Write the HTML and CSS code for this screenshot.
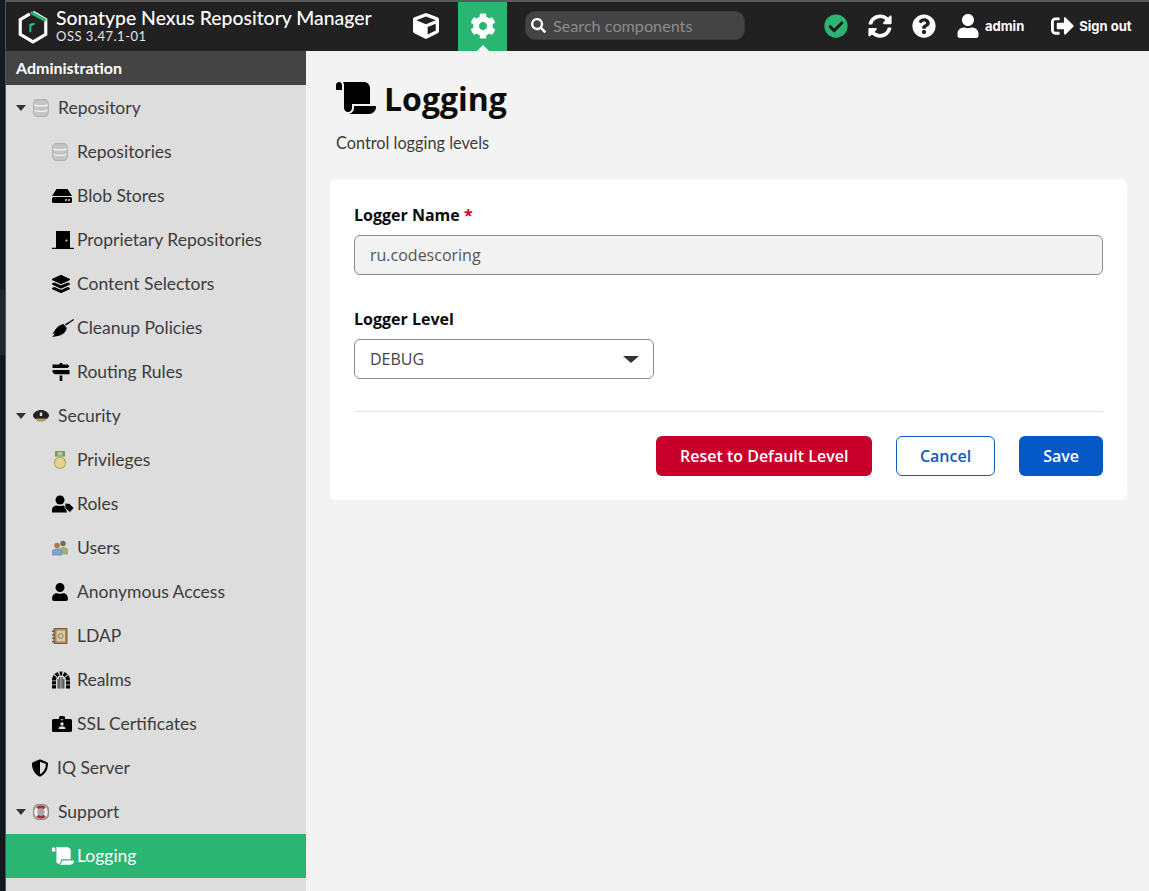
FILE: index.html
```html
<!DOCTYPE html>
<html lang="en">
<head>
    <meta charset="UTF-8">
    <title>Logging - Nexus Repository Manager</title>
    <link rel="stylesheet" href="styles.css">
</head>
<body>
    <svg class="icon-defs" aria-hidden="true">
        <symbol id="i-cube" viewBox="0 0 512 512"><path d="M239.1 6.3l-208 78c-18.7 7-31.1 25-31.1 45v225.1c0 18.2 10.3 34.8 26.5 42.9l208 104c13.5 6.8 29.4 6.8 42.9 0l208-104c16.3-8.1 26.5-24.8 26.5-42.9V129.3c0-20-12.4-37.9-31.1-44.9l-208-78C262 2.2 250 2.2 239.1 6.3zM256 68.4l192 72v1.1l-192 78-192-78v-1.1l192-72zm32 356V275.5l160-65v133.9l-160 80z"/></symbol>
        <symbol id="i-cog" viewBox="0 0 512 512"><path d="M487.4 315.7l-42.6-24.6c4.3-23.2 4.3-47 0-70.2l42.6-24.6c4.9-2.8 7.1-8.6 5.5-14-11.1-35.6-30-67.8-54.7-94.6-3.8-4.1-10-5.1-14.8-2.3L380.8 110c-17.9-15.4-38.5-27.3-60.8-35.1V25.8c0-5.6-3.9-10.5-9.4-11.7-36.7-8.2-74.3-7.8-109.2 0-5.5 1.2-9.4 6.1-9.4 11.7V75c-22.2 7.9-42.8 19.8-60.8 35.1L88.7 85.5c-4.9-2.8-11-1.9-14.8 2.3-24.7 26.7-43.6 58.9-54.7 94.6-1.7 5.4.6 11.2 5.5 14L67.3 221c-4.3 23.2-4.3 47 0 70.2l-42.6 24.6c-4.9 2.8-7.1 8.6-5.5 14 11.1 35.6 30 67.8 54.7 94.6 3.8 4.1 10 5.1 14.8 2.3l42.6-24.6c17.9 15.4 38.5 27.3 60.8 35.1v49.2c0 5.6 3.9 10.5 9.4 11.7 36.7 8.2 74.3 7.8 109.2 0 5.5-1.2 9.4-6.1 9.4-11.7v-49.2c22.2-7.9 42.8-19.8 60.8-35.1l42.6 24.6c4.9 2.8 11 1.9 14.8-2.3 24.7-26.7 43.6-58.9 54.7-94.6 1.5-5.5-.7-11.3-5.6-14.1zM256 336c-44.1 0-80-35.9-80-80s35.9-80 80-80 80 35.9 80 80-35.9 80-80 80z"/></symbol>
        <symbol id="i-search" viewBox="0 0 512 512"><path d="M505 442.7L405.3 343c-4.5-4.5-10.6-7-17-7H372c27.6-35.3 44-79.7 44-128C416 93.1 322.9 0 208 0S0 93.1 0 208s93.1 208 208 208c48.3 0 92.7-16.4 128-44v16.3c0 6.4 2.5 12.5 7 17l99.7 99.7c9.4 9.4 24.6 9.4 33.9 0l28.3-28.3c9.4-9.4 9.4-24.6.1-34zM208 336c-70.7 0-128-57.2-128-128 0-70.7 57.2-128 128-128 70.7 0 128 57.2 128 128 0 70.7-57.2 128-128 128z"/></symbol>
        <symbol id="i-check" viewBox="0 0 512 512"><circle cx="256" cy="256" r="248" fill="#2bb573"/><path fill="#1b1b1b" d="M227.314 387.314l184-184c6.248-6.248 6.248-16.379 0-22.627l-22.627-22.627c-6.248-6.249-16.379-6.249-22.628 0L216 308.118l-70.059-70.059c-6.248-6.248-16.379-6.248-22.628 0l-22.627 22.627c-6.248 6.248-6.248 16.379 0 22.627l104 104c6.249 6.249 16.379 6.249 22.628.001z"/></symbol>
        <symbol id="i-sync" viewBox="0 0 512 512"><path d="M370.72 133.28C339.458 104.008 298.888 87.962 255.848 88c-77.458.068-144.328 53.178-162.791 126.85-1.344 5.363-6.122 9.15-11.651 9.15H24.103c-7.498 0-13.194-6.807-11.807-14.176C33.933 94.924 134.813 8 256 8c66.448 0 126.791 26.136 171.315 68.685L463.03 40.97C478.149 25.851 504 36.559 504 57.941V192c0 13.255-10.745 24-24 24H345.941c-21.382 0-32.09-25.851-16.971-40.971l41.75-41.749zM32 296h134.059c21.382 0 32.09 25.851 16.971 40.971l-41.75 41.75c31.262 29.273 71.835 45.319 114.876 45.28 77.418-.07 144.315-53.144 162.787-126.849 1.344-5.363 6.122-9.15 11.651-9.15h57.304c7.498 0 13.194 6.807 11.807 14.176C478.067 417.076 377.187 504 256 504c-66.448 0-126.791-26.136-171.315-68.685L48.97 471.03C33.851 486.149 8 475.441 8 454.059V320c0-13.255 10.745-24 24-24z"/></symbol>
        <symbol id="i-help" viewBox="0 0 512 512"><path d="M504 256c0 136.997-111.043 248-248 248S8 392.997 8 256C8 119.083 119.043 8 256 8s248 111.083 248 248zM262.655 90c-54.497 0-89.255 22.957-116.549 63.758-3.536 5.286-2.353 12.415 2.715 16.258l34.699 26.31c5.205 3.947 12.621 3.008 16.665-2.122 17.864-22.658 30.113-35.797 57.303-35.797 20.429 0 45.698 13.148 45.698 32.958 0 14.976-12.363 22.667-32.534 33.976C247.128 238.528 216 254.941 216 296v4c0 6.627 5.373 12 12 12h56c6.627 0 12-5.373 12-12v-1.333c0-28.462 83.186-29.647 83.186-106.667 0-58.002-60.165-102-116.531-102zM256 338c-25.365 0-46 20.635-46 46 0 25.364 20.635 46 46 46s46-20.636 46-46c0-25.365-20.635-46-46-46z"/></symbol>
        <symbol id="i-user" viewBox="0 0 448 512"><path d="M224 256c70.7 0 128-57.3 128-128S294.7 0 224 0 96 57.3 96 128s57.3 128 128 128zm89.6 32h-16.7c-22.2 10.2-46.9 16-72.9 16s-50.6-5.8-72.9-16h-16.7C60.2 288 0 348.2 0 422.4V464c0 26.5 21.5 48 48 48h352c26.5 0 48-21.5 48-48v-41.6c0-74.2-60.2-134.4-134.4-134.4z"/></symbol>
        <symbol id="i-signout" viewBox="0 0 512 512"><path d="M497 273L329 441c-15 15-41 4.5-41-17v-96H152c-13.3 0-24-10.7-24-24v-96c0-13.3 10.7-24 24-24h136V88c0-21.4 25.9-32 41-17l168 168c9.3 9.4 9.3 24.6 0 34zM192 436v-40c0-6.6-5.4-12-12-12H96c-17.7 0-32-14.3-32-32V160c0-17.7 14.3-32 32-32h84c6.6 0 12-5.4 12-12V76c0-6.6-5.4-12-12-12H96c-53 0-96 43-96 96v192c0 53 43 96 96 96h84c6.6 0 12-5.4 12-12z"/></symbol>
        <symbol id="i-scroll" viewBox="0 0 640 512"><path d="M48 0C21.53 0 0 21.53 0 48v64c0 8.84 7.16 16 16 16h80V48C96 21.53 74.47 0 48 0zm208 412.57V352h288V96c0-52.94-43.06-96-96-96H111.59C121.74 13.41 128 29.92 128 48v368c0 38.87 34.58 69.65 74.7 63.12C234.17 474 256 444.46 256 412.57zM288 384v32c0 52.93-43.06 96-96 96h336c61.86 0 112-50.14 112-112 0-8.84-7.16-16-16-16H288z"/></symbol>
        <symbol id="i-layers" viewBox="0 0 512 512"><path d="M12.41 148.02l232.94 105.67c6.8 3.09 14.49 3.09 21.29 0l232.94-105.67c16.55-7.51 16.55-32.52 0-40.03L266.65 2.31a25.607 25.607 0 0 0-21.29 0L12.41 107.98c-16.55 7.51-16.55 32.53 0 40.04zm487.18 88.28l-58.09-26.33-161.64 73.27c-7.56 3.43-15.59 5.17-23.86 5.17s-16.29-1.74-23.86-5.17L70.51 209.97l-58.1 26.33c-16.55 7.5-16.55 32.5 0 40l232.94 105.59c6.8 3.08 14.49 3.08 21.29 0L499.59 276.3c16.55-7.5 16.55-32.5 0-40zm0 127.8l-57.87-26.23-161.86 73.37c-7.56 3.43-15.59 5.17-23.86 5.17s-16.29-1.74-23.86-5.17L70.29 337.87 12.41 364.1c-16.55 7.5-16.55 32.5 0 40l232.94 105.59c6.8 3.08 14.49 3.08 21.29 0L499.59 404.1c16.55-7.5 16.55-32.5 0-40z"/></symbol>
        <symbol id="i-shield" viewBox="16 0 480 512"><path d="M466.5 83.7l-192-80a48.15 48.15 0 0 0-36.9 0l-192 80C27.7 91.1 16 108.6 16 128c0 198.5 114.5 335.7 221.5 380.3 11.8 4.9 25.1 4.9 36.9 0C360.1 472.6 496 349.3 496 128c0-19.4-11.7-36.9-29.5-44.3zM256.1 446.3l-.1-381 175.9 73.3c-3.3 151.4-82.1 261.1-175.8 307.7z"/></symbol>
        <symbol id="i-db" viewBox="0 0 14 16"><rect x=".5" y=".5" width="13" height="15" rx="3.500" fill="#c4c4c4" stroke="#b0b0b0"/><path fill="none" stroke="#f4f4f4" stroke-width="1.200" d="M1 5.200c2 1.300 10 1.300 12 0M1 10c2 1.300 10 1.300 12 0"/></symbol>
        <symbol id="i-hdd" viewBox="0 0 20 14"><path d="M4.500 0h11l4.500 7H0zM1.500 8h17A1.500 1.500 0 0 1 20 9.500v3a1.500 1.500 0 0 1-1.500 1.500h-17A1.500 1.500 0 0 1 0 12.500v-3A1.500 1.500 0 0 1 1.500 8z"/><path fill="#ddd" d="M13 10.200h2v1.600h-2zM16 10.200h2v1.600h-2z"/></symbol>
        <symbol id="i-door" viewBox="0 0 22 18"><path d="M4 0h14v17H4zM0 16.800h22V18H0z"/><circle cx="14.500" cy="9.500" r="1" fill="#ddd"/></symbol>
        <symbol id="i-broom" viewBox="0 0 22 18"><path d="M21.500 0l.5.900-8 5.500-1-1.200z"/><path d="M11.500 5l3.200 3.800c-.3 4-3.700 7.200-8.700 8.200l-6 1c1.200-1 2.400-2.400 2.800-3.700L.4 15.200C2.800 12 4.500 6.500 11.500 5z"/></symbol>
        <symbol id="i-signs" viewBox="0 0 17 18"><path d="M7.200 0h2.600v1.500H15l2 1.800-2 1.800H0V1.500h7.200zM0 7h17v4.300H2L0 9.200zM7.200 12.500h2.600V18H7.200z"/></symbol>
        <symbol id="i-cap" viewBox="0 0 16 12"><path fill="#222" d="M8 0c4 0 8 2.500 8 5.500S12 10 8 10 0 8.500 0 5.500 4 0 8 0z"/><path fill="#e8e0b8" d="M6.800 2.500h2.400v3.500H6.800z"/><path fill="#a89a60" d="M3 8.500h10L12 11c-2 .8-6 .8-8 0z"/></symbol>
        <symbol id="i-medal" viewBox="0 0 12 16"><path fill="#7d9a5e" d="M1.500 0h9v5h-9z"/><path fill="#b9cf9d" d="M4 1h4v3H4z"/><circle cx="6" cy="10.500" r="5" fill="#e2d48f" stroke="#b3a35c"/></symbol>
        <symbol id="i-roles" viewBox="0 0 22 17"><circle cx="8" cy="4.500" r="4.500"/><path d="M0 17v-2.500C0 11.500 2.500 10 5 10c2 .8 4 .8 6 0l2 .5 2 6.500z"/><path d="M13 7.500l4.500.5 4.500 4.500-4 4.500-5-4.500z" stroke="#ddd" stroke-width=".8"/></symbol>
        <symbol id="i-users" viewBox="0 0 16 15"><circle cx="11" cy="3" r="2.700" fill="#7d6a4c"/><path fill="#9db07a" d="M7 14V9c0-1.500 2-2.500 4-2.500s5 1 5 2.500v5z"/><circle cx="5" cy="5" r="2.700" fill="#a5774d"/><path fill="#7fa3cf" stroke="#5c7fb0" stroke-width=".6" d="M.4 14.600V10.500C.4 9.300 2.500 8.400 5 8.400s4.600.9 4.600 2.100v4.100z"/></symbol>
        <symbol id="i-book" viewBox="0 0 16 16"><path fill="#a8875a" stroke="#7a5f3c" d="M2 .5h13v15H2z"/><path fill="#d8c9a8" d="M4.500 2.500h8.500v11H4.500z"/><path fill="#7a5f3c" d="M0 2.500h3v1.500H0zM0 6h3v1.500H0zM0 9.500h3V11H0zM0 13h3v1.500H0z"/><circle cx="8.700" cy="8" r="2.400" fill="none" stroke="#8a7a5c"/></symbol>
        <symbol id="i-arch" viewBox="0 0 18 17"><path d="M9 0C4 0 0 3.500 0 9v8h4V9c0-3 2.200-5 5-5s5 2 5 5v8h4V9c0-5.500-4-9-9-9z"/><path fill="#ddd" d="M5.800.4l1.400 3.800.9-.2L7.500 0zM12.200.4l-1.400 3.800-.9-.2.600-4zM1.800 3.800l3 2.300.6-.7-2.800-2.600zM16.200 3.800l-3 2.300-.6-.7 2.800-2.600zM0 9h4v.8H0zM14 9h4v.8h-4zM0 13h4v.8H0zM14 13h4v.8h-4z"/><path d="M5.600 7.500h.9V17h-.9zM7.400 5.500h.9V17h-.9zM9.600 5.500h.9V17h-.9zM11.400 7.500h.9V17h-.9z"/></symbol>
        <symbol id="i-badge" viewBox="0 0 20 16"><path d="M1.500 3h5.500V1.500A1.500 1.500 0 0 1 8.500 0h3A1.500 1.500 0 0 1 13 1.500V3h5.500A1.500 1.500 0 0 1 20 4.500v10a1.500 1.500 0 0 1-1.500 1.500h-17A1.500 1.500 0 0 1 0 14.500v-10A1.500 1.500 0 0 1 1.500 3z"/><circle cx="10" cy="8" r="1.700" fill="#ddd"/><path fill="#ddd" d="M6.500 13c0-2 1.500-2.700 3.500-2.700s3.500.7 3.500 2.700zM8.800 3.200h2.400v1H8.800z"/></symbol>
        <symbol id="i-buoy" viewBox="0 0 16 16"><rect x=".5" y=".5" width="15" height="15" rx="5" fill="#a8a8a8" stroke="#8a8a8a"/><circle cx="8" cy="8" r="5.200" fill="none" stroke="#f2eeee" stroke-width="3"/><path fill="none" stroke="#a83232" stroke-width="3" d="M4.300 4.300a5.200 5.200 0 0 1 7.400 0M4.300 11.700a5.200 5.200 0 0 0 7.400 0"/></symbol>
    </svg>

    <div class="strip"></div>
    <div class="app">
        <header class="topbar">
            <div class="brand">
                <svg class="logo" viewBox="0 0 28 32">
                    <path fill="none" stroke="#fff" stroke-width="3" d="M14 2L26 9v14l-12 7-12-7V9l9-5.300"/>
                    <path fill="none" stroke="#2bb573" stroke-width="3" d="M12 2.200L26 10"/>
                    <path fill="none" stroke="#2bb573" stroke-width="2" d="M11.500 21v-8M11.500 16c0-2 1.500-3 4-3"/>
                </svg>
                <div class="brand-text">
                    <div class="brand-name">Sonatype Nexus Repository Manager</div>
                    <div class="brand-version">OSS 3.47.1-01</div>
                </div>
            </div>
            <a class="mode"><svg class="mode-icon"><use href="#i-cube"/></svg></a>
            <a class="mode mode-active"><svg class="mode-icon"><use href="#i-cog"/></svg></a>
            <div class="search">
                <svg class="search-icon"><use href="#i-search"/></svg>
                <span>Search components</span>
            </div>
            <div class="actions">
                <svg class="action status"><use href="#i-check"/></svg>
                <svg class="action refresh"><use href="#i-sync"/></svg>
                <svg class="action help"><use href="#i-help"/></svg>
                <svg class="action user"><use href="#i-user"/></svg>
                <span class="action-label admin">admin</span>
                <svg class="action signout"><use href="#i-signout"/></svg>
                <span class="action-label">Sign out</span>
            </div>
        </header>
        <div class="body">
            <aside class="sidebar">
                <div class="sidebar-title">Administration</div>
                <div class="row parent"><i class="caret"></i><svg class="ic w16"><use href="#i-db"/></svg>Repository</div>
                <div class="row child"><svg class="ic w16"><use href="#i-db"/></svg>Repositories</div>
                <div class="row child"><svg class="ic w20"><use href="#i-hdd"/></svg>Blob Stores</div>
                <div class="row child"><svg class="ic w22"><use href="#i-door"/></svg>Proprietary Repositories</div>
                <div class="row child"><svg class="ic w18"><use href="#i-layers"/></svg>Content Selectors</div>
                <div class="row child"><svg class="ic w22"><use href="#i-broom"/></svg>Cleanup Policies</div>
                <div class="row child"><svg class="ic w18"><use href="#i-signs"/></svg>Routing Rules</div>
                <div class="row parent"><i class="caret"></i><svg class="ic w16"><use href="#i-cap"/></svg>Security</div>
                <div class="row child"><svg class="ic w16"><use href="#i-medal"/></svg>Privileges</div>
                <div class="row child"><svg class="ic w22"><use href="#i-roles"/></svg>Roles</div>
                <div class="row child"><svg class="ic w16"><use href="#i-users"/></svg>Users</div>
                <div class="row child"><svg class="ic w16"><use href="#i-user"/></svg>Anonymous Access</div>
                <div class="row child"><svg class="ic w16"><use href="#i-book"/></svg>LDAP</div>
                <div class="row child"><svg class="ic w18"><use href="#i-arch"/></svg>Realms</div>
                <div class="row child"><svg class="ic w20"><use href="#i-badge"/></svg>SSL Certificates</div>
                <div class="row single"><svg class="ic w16"><use href="#i-shield"/></svg>IQ Server</div>
                <div class="row parent"><i class="caret"></i><svg class="ic w16"><use href="#i-buoy"/></svg>Support</div>
                <div class="row child row-active"><svg class="ic w22"><use href="#i-scroll"/></svg>Logging</div>
            </aside>
            <main class="content">
                <div class="page-head">
                    <h1><svg class="title-icon"><use href="#i-scroll"/></svg>Logging</h1>
                    <p>Control logging levels</p>
                </div>
                <form class="card">
                    <label class="field-label">Logger Name <span class="req">*</span></label>
                    <div class="input">ru.codescoring</div>
                    <label class="field-label level-label">Logger Level</label>
                    <div class="select">DEBUG<i class="select-arrow"></i></div>
                    <div class="card-actions">
                        <button type="button" class="btn btn-danger">Reset to Default Level</button>
                        <button type="button" class="btn btn-outline">Cancel</button>
                        <button type="button" class="btn btn-primary">Save</button>
                    </div>
                </form>
            </main>
        </div>
    </div>
</body>
</html>
```

FILE: styles.css
```css
html, body {
    height: 100%;
}
body {
    margin: 0;
    display: flex;
    overflow: hidden;
    background: #14181c;
    font-family: "Lato", "Liberation Sans", sans-serif;
    color: #3c3c3c;
}
.icon-defs {
    width: 0;
    height: 0;
    position: absolute;
}
.strip {
    width: 5px;
    flex: none;
    background: linear-gradient(#171b1f 0 290px, #24272a 290px 355px, #14181c 355px);
    border-right: 1px solid #3f5866;
}
.app {
    flex: 1;
    min-width: 0;
    display: flex;
    flex-direction: column;
}

/* top bar */
.topbar {
    height: 49px;
    flex: none;
    display: flex;
    background: #212121;
    border-top: 2px solid #5a5a5a;
    color: white;
}
.brand {
    width: 395px;
    display: flex;
    align-items: center;
    box-sizing: border-box;
    padding-left: 12px;
}
.logo {
    width: 30px;
    height: 34px;
    margin-right: 8px;
}
.brand-text {
    padding-bottom: 3px;
}
.brand-name {
    font-size: 19.4px;
    font-weight: 500;
    line-height: 22px;
    white-space: nowrap;
}
.brand-version {
    font-size: 13px;
    line-height: 14px;
    letter-spacing: 0.5px;
    color: #e4e4e4;
}
.mode {
    width: 49px;
    height: 49px;
    box-sizing: border-box;
    padding-bottom: 2px;
    display: flex;
    align-items: center;
    justify-content: center;
    position: relative;
    fill: white;
}
.mode-active {
    background: #2bb573;
    margin-left: 8px;
}
.mode-active::after {
    content: "";
    position: absolute;
    left: 19px;
    bottom: 0;
    border: 6px solid transparent;
    border-top: 0;
    border-bottom-color: #f3f3f3;
}
.mode-icon {
    width: 26px;
    height: 26px;
}
.search {
    width: 220px;
    height: 29px;
    margin: 9px 0 0 18px;
    box-sizing: border-box;
    display: flex;
    align-items: center;
    gap: 7px;
    padding-left: 5px;
    background: #444;
    border: 1px solid #3a3a3a;
    border-radius: 10px;
    font-size: 16.2px;
    color: #8c8c8c;
}
.search-icon {
    width: 15px;
    height: 15px;
    fill: white;
}
.actions {
    display: flex;
    align-items: center;
    margin-left: 79px;
    padding-bottom: 2px;
    fill: white;
}
.action {
    width: 24px;
    height: 24px;
    flex: none;
}
.refresh {
    margin-left: 20px;
}
.help {
    margin-left: 20px;
}
.user {
    margin-left: 20px;
}
.signout {
    margin-left: 27px;
    width: 23px;
}
.action-label {
    font-family: "Inter", "Liberation Sans", sans-serif;
    font-size: 13px;
    font-weight: 700;
    margin-left: 5px;
    white-space: nowrap;
}

/* sidebar */
.body {
    flex: 1;
    min-height: 0;
    display: flex;
}
.sidebar {
    width: 300px;
    flex: none;
    background: #ddd;
    fill: black;
}
.sidebar-title {
    height: 34px;
    margin-bottom: 1px;
    line-height: 34px;
    padding-left: 10px;
    background: #444;
    color: white;
    font-size: 16px;
    font-weight: 700;
}
.row {
    height: 44px;
    display: flex;
    align-items: center;
    box-sizing: border-box;
    padding-bottom: 1px;
    font-size: 17.5px;
    white-space: nowrap;
}
.parent {
    padding-left: 10px;
}
.child {
    padding-left: 46px;
}
.single {
    padding-left: 26px;
}
.caret {
    width: 0;
    height: 0;
    margin: 1px 7px 0 0;
    border: 5px solid transparent;
    border-top: 6px solid #333;
    border-bottom: 0;
}
.ic {
    height: 18px;
    flex: none;
    margin-top: 1px;
    margin-right: 9px;
}
.w16 {
    width: 16px;
}
.w18 {
    width: 18px;
    margin-right: 7px;
}
.w20 {
    width: 20px;
    margin-right: 5px;
}
.w22 {
    width: 22px;
    margin-right: 3px;
}
.row-active {
    background: #2bb573;
    color: white;
    fill: white;
}

/* content */
.content {
    flex: 1;
    min-width: 0;
    background: #f3f3f3;
    padding-left: 24px;
}
.page-head {
    padding: 25px 0 0 6px;
    height: 128px;
    box-sizing: border-box;
}
.page-head h1 {
    margin: 0;
    display: flex;
    align-items: center;
    height: 44px;
    font-family: "Open Sans", "Liberation Sans", sans-serif;
    font-size: 32px;
    font-weight: 700;
    color: #0c0c0c;
}
.title-icon {
    width: 40px;
    height: 32px;
    margin-right: 8px;
}
.page-head p {
    margin: 13px 0 0;
    font-size: 16.3px;
    line-height: 20px;
    color: #3c3c3c;
}
.card {
    width: 797px;
    height: 321px;
    box-sizing: border-box;
    padding: 24px;
    background: white;
    border-radius: 6px;
    font-family: "Open Sans", "Liberation Sans", sans-serif;
}
.field-label {
    display: block;
    height: 24px;
    line-height: 24px;
    margin-bottom: 8px;
    font-size: 16px;
    font-weight: 700;
    color: #0c0c0c;
}
.req {
    color: #c8002b;
}
.level-label {
    margin-top: 32px;
}
.input {
    height: 40px;
    box-sizing: border-box;
    padding-left: 15px;
    line-height: 38px;
    font-size: 16px;
    color: #555;
    background: #f2f2f2;
    border: 1px solid #8c8c8c;
    border-radius: 6px;
}
.select {
    width: 300px;
    height: 40px;
    box-sizing: border-box;
    padding: 0 14px 0 15px;
    display: flex;
    align-items: center;
    justify-content: space-between;
    font-size: 16px;
    color: #444;
    border: 1px solid #8c8c8c;
    border-radius: 6px;
}
.select-arrow {
    width: 0;
    height: 0;
    border: 8px solid transparent;
    border-top: 7px solid #333;
    border-bottom: 0;
}
.card-actions {
    margin-top: 32px;
    padding-top: 24px;
    border-top: 1px solid #e1e3ec;
    display: flex;
    justify-content: flex-end;
    gap: 24px;
}
.btn {
    height: 40px;
    padding: 0 23px;
    font-family: inherit;
    font-size: 16px;
    font-weight: 600;
    border: 1px solid transparent;
    border-radius: 6px;
    cursor: pointer;
}
.btn-danger {
    padding: 0 22.5px;
    background: #c8002b;
    color: white;
}
.btn-outline {
    background: white;
    color: #0f5bbf;
    border-color: #0f5bbf;
}
.btn-primary {
    background: #0459c7;
    color: white;
}
```
